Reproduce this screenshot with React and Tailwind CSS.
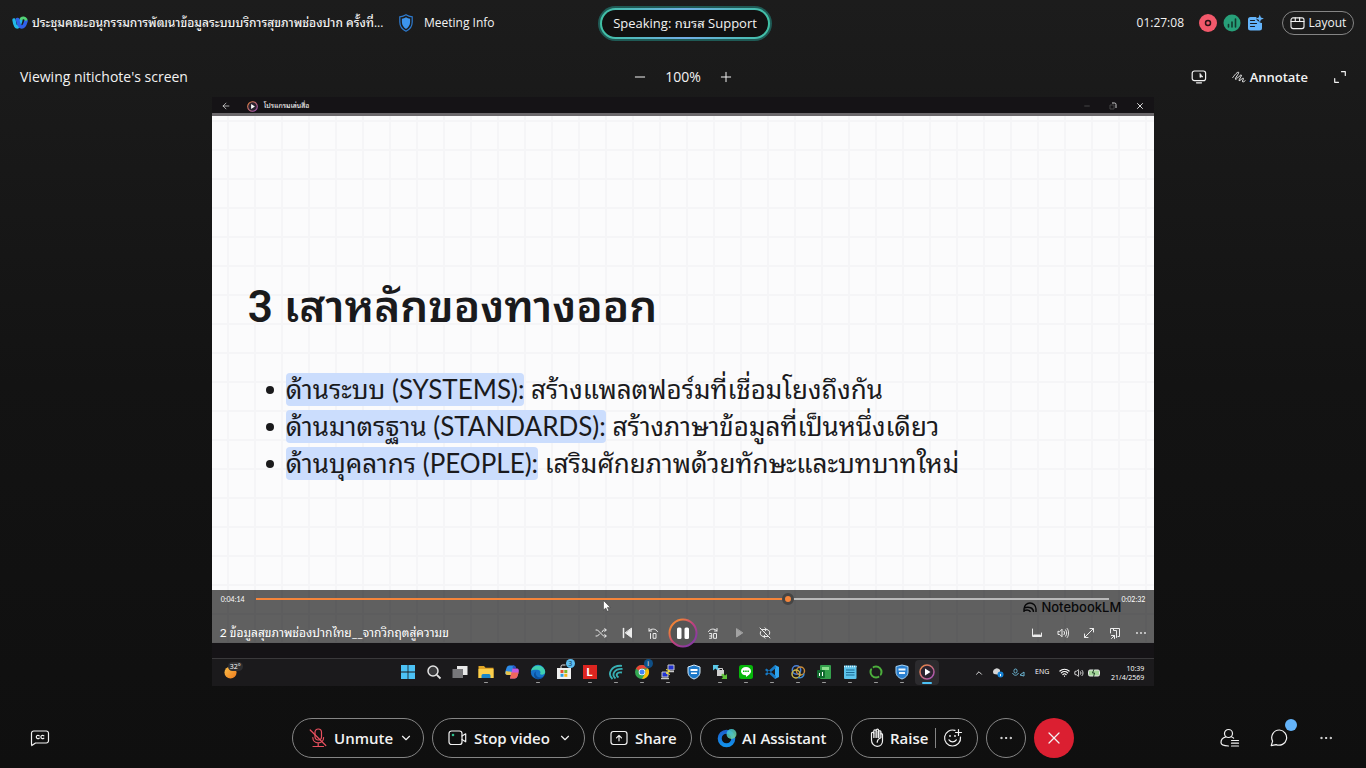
import React, { useState } from 'react';
import { ArrowLeft, ChevronDown, ChevronUp, Minus, Plus, X, Wifi, Volume2, MoreHorizontal } from 'lucide-react';

const line = { fill: "none", stroke: "currentColor", strokeWidth: 1.2, strokeLinecap: "round", strokeLinejoin: "round" };

/* ---------- Meeting icons ---------- */

function WebexLogo() {
  return (
    <svg width="16" height="14" viewBox="0 0 16 14" fill="none" strokeLinecap="round">
      <path d="M2 4C2.600 8 3.600 11 5.300 11c2 0 2.800-4 3.600-7" stroke="#22b8e8" strokeWidth="3.400" />
      <path d="M5.500 3.500c.8 3.600 2.300 7.500 4.300 7.500 2.200 0 3.500-3.400 4.200-6" stroke="#2f62ea" strokeWidth="3.600" />
      <path d="M9.300 2.600c1.400-1.200 3.600-1 4.700.8" stroke="#52d275" strokeWidth="2.800" />
    </svg>
  );
}

function ShieldInfo() {
  return (
    <svg width="14" height="18" viewBox="0 0 14 18">
      <path d="M7 .8C5.200 2 3 2.700.8 2.900V8c0 4.300 2.700 7.600 6.200 9.200 3.500-1.600 6.200-4.900 6.200-9.200V2.900C11 2.700 8.800 2 7 .8z" fill="none" stroke="#2d7bd0" strokeWidth="1.200" />
      <path d="M7 3.200C5.700 4 4.300 4.500 2.900 4.700V8c0 3.200 1.700 5.500 4.100 6.900C9.400 13.500 11.100 11.200 11.100 8V4.700C9.700 4.500 8.300 4 7 3.200z" fill="#3c95ee" />
    </svg>
  );
}

function NotesIcon() {
  return (
    <svg width="18" height="18" viewBox="0 0 18 18">
      <path d="M3.500 3H9.500a3.500 3.500 0 0 0 2 4.200A4 4 0 0 0 15 9v5a2.500 2.500 0 0 1-2.500 2.500h-9A2.500 2.500 0 0 1 1 14V5.500A2.500 2.500 0 0 1 3.500 3z" fill="#64b4fa" />
      <path d="M12.800.5l1.100 3 3 1.100-3 1.100-1.100 3-1.100-3-3-1.100 3-1.100z" fill="#64b4fa" />
      <path d="M3.500 6.500h4M3.500 9.500h6M3.500 12.500h4" stroke="#1a1a1a" strokeWidth="1.200" strokeLinecap="round" />
    </svg>
  );
}

function LayoutIcon() {
  return (
    <svg width="15" height="13" viewBox="0 0 16 14" {...line}>
      <rect x="1" y="1" width="14" height="11.500" rx="2.200" />
      <path d="M1 4.800h14M5.600 1v3.800M10.300 1v3.800" />
    </svg>
  );
}

function RemoteControl() {
  return (
    <svg width="16" height="14" viewBox="0 0 16 14" {...line}>
      <rect x="1.200" y="1" width="13.400" height="9.600" rx="2.200" />
      <path d="M5.500 12.800h5" />
      <path d="M9 3.800v3.700l1-.8 1.400.2z" fill="currentColor" strokeWidth=".8" />
    </svg>
  );
}

function Scribble() {
  return (
    <svg width="14" height="12" viewBox="0 0 14 12" {...line} strokeWidth="1">
      <path d="M.8 6.500C3 3.500 5.400.8 6.500 1.200 7.700 1.900 2.500 7.600 3.500 8.300c1 .6 4.800-5 5.800-4.300.9.700-3 5-2.200 5.700.8.500 3.300-3 4.200-2.500.8.500-1.400 2.800-.7 3.600.5.400 1.500-.2 2.500-1" />
    </svg>
  );
}

function Corners() {
  return (
    <svg width="12" height="12" viewBox="0 0 12 12" {...line}>
      <path d="M7.500.7h3.800v3.800M.7 7.500v3.800h3.800" />
    </svg>
  );
}

function MicOff() {
  return (
    <svg width="18" height="20" viewBox="0 0 18 20" {...line} stroke="#e8505f">
      <rect x="6" y="1" width="6.500" height="11" rx="3.200" />
      <path d="M3.800 9.500c0 3 2.300 5.300 5.400 5.300 3.200 0 5.400-2.300 5.400-5.300M9.200 14.800v3.700M4 18.500h10.500M1.200 2l15.600 15.500" />
    </svg>
  );
}

function Camera() {
  return (
    <svg width="20" height="16" viewBox="0 0 20 16" {...line}>
      <rect x="1" y="1" width="13" height="13.500" rx="2.600" />
      <path d="M14 6l3.700-2.200v8L14 9.600" />
      <circle cx="5" cy="5" r="1.300" fill="#2fbf8c" stroke="none" />
    </svg>
  );
}

function ShareIcon() {
  return (
    <svg width="18" height="16" viewBox="0 0 18 16" {...line}>
      <rect x="1" y="1.500" width="16" height="13" rx="2.400" />
      <path d="M9 10.800V5.500M6.500 7.800L9 5.300l2.500 2.500" />
    </svg>
  );
}

function AssistantIcon() {
  return (
    <svg width="20" height="20" viewBox="0 0 20 20">
      <defs>
        <linearGradient id="ai" x1="0" y1="0" x2="0" y2="1">
          <stop offset="0" stopColor="#1b63d0" />
          <stop offset="1" stopColor="#1390ea" />
        </linearGradient>
        <linearGradient id="bubble" x1="0" y1="0" x2="1" y2="1">
          <stop offset="0" stopColor="#2fc0ea" />
          <stop offset="1" stopColor="#7fd88a" />
        </linearGradient>
      </defs>
      <circle cx="9.500" cy="10.500" r="6.800" fill="none" stroke="url(#ai)" strokeWidth="4" />
      <circle cx="14.500" cy="6" r="5" fill="url(#bubble)" opacity="0.85" />
    </svg>
  );
}

function Hand() {
  return (
    <svg width="14" height="20" viewBox="0 0 14 20" {...line}>
      <path d="M1.500 12V5.200a1.200 1.200 0 0 1 2.300 0V3.100a1.200 1.200 0 0 1 2.400 0v-.7a1.200 1.200 0 0 1 2.400 0v1.200a1.200 1.200 0 0 1 2.300 0V6a1 1 0 0 1 1.600.8V13c0 3-2.200 5.300-5.400 5.300S1.500 15.500 1.500 12z" />
      <path d="M3.800 5v4.500M6.200 3v6.500M8.600 3v6.500M10.900 5v4.500" />
      <path d="M5 4v5.500M7.400 3v6.500M9.800 4v5.500" opacity="0.5" />
      <path d="M10.500 10C8.600 10.500 7.400 12 7.200 14.200" />
    </svg>
  );
}

function SmilePlus() {
  return (
    <svg width="20" height="20" viewBox="0 0 20 20" {...line}>
      <path d="M12 2.400A8 8 0 1 0 17.500 9" />
      <path d="M6 11.800c1.800 2.700 5.500 2.700 7.300 0M15.500 1.500v6M12.500 4.500h6" />
      <circle cx="7" cy="8" r=".9" fill="currentColor" stroke="none" />
      <circle cx="12" cy="8" r=".9" fill="currentColor" stroke="none" />
    </svg>
  );
}

function Captions() {
  return (
    <svg width="20" height="18" viewBox="0 0 20 18" {...line}>
      <path d="M3.700 2h12.600A2.200 2.200 0 0 1 18.500 4.200v7.600a2.200 2.200 0 0 1-2.200 2.200H5.500l-3.700 2.600c-.3-.6-.3-1.200-.3-2V4.200A2.200 2.200 0 0 1 3.700 2z" />
      <path d="M9.200 6.800c-1.300-1-2.900-.2-2.900 1.200s1.600 2.200 2.900 1.200M13.800 6.800c-1.300-1-2.900-.2-2.900 1.200s1.600 2.200 2.900 1.200" />
    </svg>
  );
}

function Participants() {
  return (
    <svg width="20" height="20" viewBox="0 0 20 20" {...line}>
      <circle cx="8.500" cy="5.500" r="4" />
      <path d="M5.800 8.800C2.800 9.600 1 12 1 14.500c0 2.300 2 3.300 7.500 3.500M11.300 8.800c.9.300 1.700.7 2.300 1.300" />
      <path d="M11.500 12.500h7M11.500 15.200h7M11.500 18h7" />
    </svg>
  );
}

function Chat() {
  return (
    <svg width="18" height="18" viewBox="0 0 18 18" {...line}>
      <path d="M9.500 1a7.600 7.600 0 1 1-3.400 14.600L1.200 16.700l1.400-4.600A7.600 7.600 0 0 1 9.500 1z" />
    </svg>
  );
}

/* ---------- Player icons ---------- */

function PlayerIcon({ d, dim, children }) {
  return (
    <svg width="12" height="12" viewBox="0 0 12 12" {...line} strokeWidth="1" className={dim ? "text-[#a3a3a3]" : "text-[#ececec]"}>
      {d && <path d={d} />}
      {children}
    </svg>
  );
}

const playerLeft = [
  { label: "Shuffle", icon: <PlayerIcon d="M1 3h1.500L8.500 9h2.500M1 9h1.500l2-2M7 5l1.500-2H11M9.800 1.500L11.200 3 9.800 4.500M9.800 7.500L11.200 9l-1.400 1.500" /> },
  { label: "Previous", icon: <PlayerIcon><path d="M2.500 1.500v9" strokeWidth="1.500" /><path d="M10.500 1.500v9L4.500 6z" fill="currentColor" /></PlayerIcon> },
  { label: "Back 10 seconds", icon: <PlayerIcon d="M2 4a5 5 0 0 1 8.500.5M2 1.500V4h2.500M3.500 6.500v5M6.500 6.500h2.500v4.800H6.500z" /> },
];

const playerRight = [
  { label: "Forward 30 seconds", icon: <PlayerIcon d="M10 4a5 5 0 0 0-8.500.5M10 1.500V4H7.500M2.500 6.500h2.200v4.800H2.500M2.700 9h2M7 6.500h2.500v4.800H7z" /> },
  { label: "Next", icon: <PlayerIcon dim><path d="M3.500 2v8L9.500 6z" fill="currentColor" /></PlayerIcon> },
  { label: "Repeat", icon: <PlayerIcon d="M3.500 2.500h4a3.300 3.300 0 0 1 2.800 5M8.500 9.500h-4a3.300 3.300 0 0 1-2.800-5M1 1l10 10M6 .8l1.700 1.700L6 4M6 8L4.300 9.500 6 11.200" /> },
];

const playerTools = [
  { label: "Subtitles", icon: <PlayerIcon><path d="M1.500 2v7.500h9V6" /><path d="M3 8.500h6" strokeWidth="2" /></PlayerIcon> },
  { label: "Volume", icon: <PlayerIcon d="M1 4.500v3h1.800L5 9.800V2.200L2.800 4.500zM7 4.300c.8 1 .8 2.400 0 3.400M8.600 2.800c1.500 1.900 1.500 4.500 0 6.400M10.200 1.500c2 2.700 2 6.300 0 9" /> },
  { label: "Full screen", icon: <PlayerIcon d="M1.500 10.500l9-9M7 1.500h3.500V5M1.500 7v3.500H5" /> },
  { label: "Mini player", icon: <PlayerIcon d="M1.500 6V1.500h9v8H9M4.500 1.500v2h3v7M2.500 8.500h3v3M2.500 11.500l3-3" /> },
  { label: "More options", icon: <PlayerIcon><circle cx="2" cy="6" r=".9" fill="currentColor" stroke="none" /><circle cx="6" cy="6" r=".9" fill="currentColor" stroke="none" /><circle cx="10" cy="6" r=".9" fill="currentColor" stroke="none" /></PlayerIcon> },
];

function MediaPlayerLogo({ size }) {
  return (
    <svg width={size} height={size} viewBox="0 0 16 16">
      <defs>
        <linearGradient id="ring" x1="0" y1="0" x2="1" y2="1">
          <stop offset="0" stopColor="#f08a3c" />
          <stop offset="1" stopColor="#a04fc0" />
        </linearGradient>
      </defs>
      <circle cx="8" cy="8" r="7" fill="#2c2430" stroke="url(#ring)" strokeWidth="1.500" />
      <path d="M6 4.500v7L11.500 8z" fill="#fff" />
    </svg>
  );
}

/* ---------- Windows taskbar ---------- */

const taskbarApps = [
  { name: "Start", art: <path d="M1 1h6.600v6.600H1zM8.400 1H15v6.600H8.400zM1 8.400h6.600V15H1zM8.400 8.400H15V15H8.400z" fill="#4cc2f5" /> },
  { name: "Search", art: <><circle cx="7" cy="7" r="5" fill="#3a3a3c" stroke="#e4e4e4" strokeWidth="1.500" /><path d="M10.800 10.800L14.500 14.500" stroke="#e4e4e4" strokeWidth="1.800" /></> },
  { name: "Task view", art: <><path d="M5 2h10.500v9H5z" fill="#e8e8e8" /><path d="M.5 5h10.500v9H.5z" fill="#77777a" /></> },
  { name: "File Explorer", open: true, art: <><path d="M.5 2h5.500l1.500 1.800h8V14H.5z" fill="#e0a526" /><path d="M.5 5h15v9H.5z" fill="#fbcf4c" /><path d="M3.500 14v-2.500A1.500 1.500 0 0 1 5 10h6a1.500 1.500 0 0 1 1.500 1.500V14z" fill="#1a86c8" /></> },
  { name: "Copilot", art: <><path d="M5.500 1.500H10L7.500 11H3.500C1 11 .8 9 1.500 7l1-3c.5-1.500 1.300-2.500 3-2.500z" fill="#2d8be8" /><path d="M2 7l-.5 2c-.2 1.500.8 2 2 2h4L8.300 8z" fill="#e8c44c" /><path d="M9 1.500h1c1.500 0 1.800 1 2.300 3H8.500z" fill="#2456c8" /><path d="M8.500 4.500h4C15 4.500 15.200 6.500 14.500 9l-1 3c-.5 1.500-1.300 2.500-3 2.500H6z" fill="#c45ae0" /><path d="M7.500 8.500h7l-1 3.500c-.5 1.500-1.300 2.500-3 2.500H6z" fill="#f0685c" /></> },
  { name: "Edge", open: true, art: <><circle cx="8" cy="8" r="7.200" fill="#1571c8" /><path d="M1 7a7.200 7.200 0 0 1 14.200 1c0 2.500-3.500 3.500-5.200 2 1.200-2 .2-4-2.500-4.200C4.500 5.600 2 6 1 7z" fill="#3fd0b0" /><path d="M7 6.500c-2.500 2-1.500 6.500 3 7 2 .1 3-.5 4-1.300-1 1.800-3.500 3-6 3-3-.5-5-4-3.500-6.500z" fill="#0b4f9c" /></> },
  { name: "Microsoft Store", art: <><path d="M5 4V2.500A1.500 1.500 0 0 1 6.500 1h3" fill="none" stroke="#e8e8e8" /><path d="M1 4h14v11H1z" fill="#f0f0f0" /><path d="M4.500 6h3v3h-3z" fill="#e5502c" /><path d="M8.300 6h3v3h-3z" fill="#79b829" /><path d="M4.500 9.800h3v3h-3z" fill="#2a9fe0" /><path d="M8.300 9.800h3v3h-3z" fill="#f6b518" /></>, badge: "3" },
  { name: "L", open: true, art: <rect x="1" y="1" width="14" height="14" fill="#dc2520" />, letter: "L" },
  { name: "Wireshark", open: true, art: <g fill="none" stroke="#38b0b4" strokeWidth="1.800"><path d="M4.500 15C-1 10 3 1 14 1.800" /><path d="M7.500 14.500C3 10.500 6.500 4.500 14.500 5" /><path d="M10.500 13.500C7 11 9 7.500 14 8.500" /></g> },
  { name: "Chrome", open: true, art: <><circle cx="8" cy="8" r="7" fill="#34a853" /><path d="M8 1a7 7 0 0 1 6.100 3.500H8A3.500 3.500 0 0 0 4.800 6.800L2 4.400A7 7 0 0 1 8 1z" fill="#ea4335" /><path d="M14.100 4.500A7 7 0 0 1 8 15l3-5.200a3.500 3.500 0 0 0 0-3.600z" fill="#fbbc05" /><circle cx="8" cy="8" r="3.300" fill="#fff" /><circle cx="8" cy="8" r="2.500" fill="#4285f4" /></>, badge: "i" },
  { name: "PuTTY", open: true, art: <><path d="M8 1h6v5H8zM2 8h6v5H2z" fill="#2233d0" stroke="#c8c8c8" /><path d="M8 7.500h6M1 14.500h8" stroke="#c8c8c8" strokeWidth="1.500" /><path d="M6 5.500l4 1.500-4 2 4 1.500" fill="none" stroke="#f3e23a" /></> },
  { name: "Defender", art: <><path d="M8 1l6 2v5c0 3.500-2.500 5.800-6 7-3.500-1.200-6-3.500-6-7V3z" fill="#1c78c8" stroke="#d6ebfa" /><path d="M4.500 5h7v2h-7zM5 8.500h6v1.500H5z" fill="#fff" /></> },
  { name: "WinSCP", open: true, art: <><path d="M1 1h6L5.500 3 8 5.500 6 7 3.500 4.500 1 6.500z" fill="#5ac8e8" /><path d="M5 6h7v6H5z" fill="#d0d0d0" /><path d="M6.500 6V4.500h4V6" fill="none" stroke="#d0d0d0" /><path d="M15 15H9.500l1.500-2-2-2 2-1.500 2 2L15 10z" fill="#5fc23a" /></> },
  { name: "LINE", open: true, art: <><rect x="1" y="1" width="14" height="14" rx="2.500" fill="#06b60a" /><path d="M8 3c3 0 5 1.900 5 4.200 0 2.500-3.200 4.600-5 5.800v-1.700C5 11.300 3 9.500 3 7.200S5 3 8 3z" fill="#fff" /><path d="M5 7.200h6" stroke="#06b60a" strokeWidth="1.600" strokeDasharray="1.500 .7" /></> },
  { name: "VS Code", open: true, art: <><path d="M11 1l4 2v10l-4 2z" fill="#2fa5ee" /><path d="M11 1L1 10l1.500 1.500L12 4zM11 15L1 6l1.500-1.500L12 12z" fill="#1679c4" /></> },
  { name: "Navicat", open: true, art: <g fill="none" strokeWidth="1.500"><circle cx="6.500" cy="6" r="4.200" stroke="#4a80d8" /><circle cx="10.500" cy="7" r="4" stroke="#c88a38" /><circle cx="6" cy="10" r="4" stroke="#c9b94c" /><path d="M8 13.500c3 1 6-.5 6-4" stroke="#3d8ad0" /></g> },
  { name: "Sheets", open: true, art: <><rect x="4" y="1" width="11" height="14" rx="1" fill="#34a04c" /><path d="M6 3h7v3H6z" fill="#8de08e" /><rect x="1" y="6" width="8" height="8" rx="1" fill="#116b2e" /><path d="M3.500 12V9M6.500 12V8" stroke="#fff" /></> },
  { name: "Notepad", open: true, art: <><rect x="2" y="1.500" width="12.500" height="13.500" rx="1" fill="#5cc2ea" /><path d="M2 2.500h12.500" stroke="#dff4fc" strokeWidth="1.500" strokeDasharray="1 1" /><path d="M4 6h8.500M4 8.500h8.500M4 11h8.500" stroke="#1b6a94" /></> },
  { name: "Sync", open: true, art: <><circle cx="8" cy="8" r="5.500" fill="none" stroke="#4caf3c" strokeWidth="2" /><path d="M3.500 3l2 3.200M12.500 13l-2-3.200" stroke="#1b1b1d" strokeWidth="1.500" /></> },
  { name: "Security", open: true, art: <><path d="M8 1l6 1.500V8c0 3.500-2.500 5.800-6 7-3.500-1.200-6-3.500-6-7V2.500z" fill="#2a80d0" stroke="#a8d4f4" /><path d="M4.500 4.500h7v2h-7zM5 8h6v2H5z" fill="#e8f5fd" /></> },
];

function Taskbar() {
  return (
    <div className="flex h-[28px] shrink-0 items-center border-t border-[#3a393b] bg-[#1b1a1c] text-white">
      <div className="w-[183px] shrink-0 pl-3">
        <div className="relative w-[18px]">
          <svg width="13" height="13" viewBox="0 0 14 14">
            <defs>
              <linearGradient id="sun" x1="0" y1="0" x2="1" y2="1">
                <stop offset="0" stopColor="#fbc04a" />
                <stop offset="1" stopColor="#ee7a1c" />
              </linearGradient>
            </defs>
            <circle cx="7" cy="7" r="6.500" fill="url(#sun)" />
          </svg>
          <span className="absolute -top-1 left-1 rounded-full bg-[#2e2e30] px-[2px] text-[7px] leading-[9px]">32°</span>
        </div>
      </div>
      <div className="flex items-center">
        {taskbarApps.map(app => (
          <button key={app.name} aria-label={app.name} className="relative flex h-[27px] w-[26px] items-center justify-center pb-[2px]">
            <svg width="16" height="16" viewBox="0 0 16 16">{app.art}</svg>
            {app.letter && <span className="absolute font-['Inter'] text-[11px] leading-4 font-bold">{app.letter}</span>}
            {app.badge && (
              <span className={`absolute top-0 right-[2px] h-[9px] w-[9px] rounded-full text-center text-[7px] leading-[9px] ${app.badge === "3" ? "bg-[#5cbdf0] text-[#10344a]" : "bg-[#0f4f86] text-white"}`}>
                {app.badge}
              </span>
            )}
            {app.open && <span className="absolute bottom-[3px] h-px w-[4px] rounded-full bg-[#9a9a9a]" />}
          </button>
        ))}
        <button aria-label="Media Player" className="relative flex h-[25px] w-[24px] items-center justify-center rounded-sm bg-[#2c2b2e] pb-[2px]">
          <MediaPlayerLogo size={16} />
          <span className="absolute bottom-px h-[2px] w-[10px] rounded-full bg-[#4cc2f5]" />
        </button>
      </div>
      <div className="ml-auto flex items-center pr-[10px]">
        <ChevronUp size={10} strokeWidth={2} />
        <svg className="ml-[9px]" width="11" height="10" viewBox="0 0 11 10"><path d="M1 6a3 3 0 0 1 1-5 3.500 3.500 0 0 1 5 1v5z" fill="#d5d5d5" /><circle cx="7.500" cy="6.500" r="3" fill="#1583d6" /><path d="M7.500 6v2.200" stroke="#fff" /></svg>
        <svg className="ml-2" width="13" height="10" viewBox="0 0 13 10" fill="none" stroke="#6cb6d4"><rect x="2" y="1" width="3" height="4" rx="1.500" /><path d="M.5 5c1.500 3 4.500 3 6 0M8 7l4-3v4z" /></svg>
        <span className="ml-[10px] text-[7px]">ENG</span>
        <Wifi className="ml-[10px]" size={11} strokeWidth={2.5} />
        <Volume2 className="ml-1" size={10} strokeWidth={2} />
        <svg className="ml-1" width="13" height="8" viewBox="0 0 13 8"><rect x=".5" y="1" width="11" height="6" rx="1.500" fill="#a4d69a" stroke="#e8e8e8" /><path d="M6 0L4.500 4h2L5.500 8" fill="none" stroke="#23402a" /></svg>
        <div className="ml-[8px] w-[35px] text-right text-[7px] leading-[9px]">
          <div>10:39</div>
          <div>21/4/2569</div>
        </div>
      </div>
    </div>
  );
}

/* ---------- Shared screen ---------- */

const pillars = [
  { term: "ด้านระบบ (SYSTEMS):", text: "สร้างแพลตฟอร์มที่เชื่อมโยงถึงกัน" },
  { term: "ด้านมาตรฐาน (STANDARDS):", text: "สร้างภาษาข้อมูลที่เป็นหนึ่งเดียว" },
  { term: "ด้านบุคลากร (PEOPLE):", text: "เสริมศักยภาพด้วยทักษะและบทบาทใหม่" },
];

function PlayerButton({ item }) {
  return (
    <button aria-label={item.label} className="flex h-5 w-[26px] items-center justify-center">{item.icon}</button>
  );
}

function PlayerControls() {
  const [position, setPosition] = useState(253);
  const percent = (position / 406) * 100;

  return (
    <div className="absolute inset-x-0 bottom-0 flex h-[53px] flex-col justify-between bg-black/62 text-white">
      <div className="flex h-[18px] items-center px-[9px] text-[7px]">
        <span className="w-[35px]">0:04:14</span>
        <div className="relative flex h-3 flex-1 items-center">
          <div className="h-[2px] w-full bg-[#b9b9b9]">
            <div className="h-full bg-[#f5853b]" style={{ width: `${percent}%` }} />
          </div>
          <div className="absolute h-3 w-3 -translate-x-1/2 rounded-full border-[3px] border-[#454545] bg-[#f5853b]" style={{ left: `${percent}%` }} />
          <input
            type="range"
            aria-label="Seek"
            min="0"
            max="406"
            value={position}
            onChange={(e) => setPosition(Number(e.target.value))}
            className="absolute inset-0 w-full opacity-0"
          />
        </div>
        <span className="w-[36px] text-right">0:02:32</span>
      </div>
      <div className="grid h-5 grid-cols-[1fr_auto_1fr] items-center">
        <span className="pl-2 text-[12px] leading-5 whitespace-nowrap">2 ข้อมูลสุขภาพช่องปากไทย__จากวิกฤตสู่ความข</span>
        <div className="flex items-center">
          {playerLeft.map(item => <PlayerButton key={item.label} item={item} />)}
          <button aria-label="Pause" className="flex h-5 w-[34px] items-center justify-center">
            <svg className="shrink-0" width="30" height="30" viewBox="0 0 30 30">
              <defs>
                <linearGradient id="pause" x1="0" y1="0" x2="1" y2="1">
                  <stop offset="0.2" stopColor="#f08038" />
                  <stop offset="0.5" stopColor="#c0417f" />
                  <stop offset="0.8" stopColor="#8c3aa0" />
                </linearGradient>
              </defs>
              <circle cx="15" cy="15" r="13.500" fill="#555" stroke="url(#pause)" strokeWidth="2" />
              <rect x="9" y="9.500" width="4.500" height="11.500" rx="1.500" fill="#fff" />
              <rect x="16.500" y="9.500" width="4.500" height="11.500" rx="1.500" fill="#fff" />
            </svg>
          </button>
          {playerRight.map(item => <PlayerButton key={item.label} item={item} />)}
        </div>
        <div className="flex justify-end">
          {playerTools.map(item => <PlayerButton key={item.label} item={item} />)}
        </div>
      </div>
    </div>
  );
}

function SharedScreen() {
  return (
    <div className="mx-auto flex w-[69%] flex-1 flex-col bg-[#151316]">
      <div className="flex h-4 shrink-0 items-center pt-[2px] text-white">
        <ArrowLeft className="ml-[9px]" size={10} strokeWidth={1.5} />
        <span className="ml-4"><MediaPlayerLogo size={11} /></span>
        <span className="ml-[6px] text-[7px] leading-3">โปรแกรมเล่นสื่อ</span>
        <div className="ml-auto flex items-center gap-[18px] pr-[9px]">
          <Minus size={8} strokeWidth={1.5} className="text-[#777]" />
          <svg width="8" height="8" viewBox="0 0 8 8" fill="none" stroke="#ccc"><path d="M3 1h2.500A1.500 1.500 0 0 1 7 2.500V6" /><path d="M1 3v4h4V3z" stroke="#444" /></svg>
          <X size={10} strokeWidth={2} />
        </div>
      </div>
      <div className="h-[3px] shrink-0 bg-[#6b686b]" />

      <div className="relative flex flex-1 flex-col justify-center bg-[#fbfbfc] bg-[linear-gradient(to_right,#f5f5f7_2px,transparent_2px),linear-gradient(to_bottom,#f5f5f7_2px,transparent_2px)] bg-[size:27px_29px] bg-[position:15px_4px] pb-[2px] pl-[36px] font-['Lato','Noto_Sans_Thai_Looped','Loma','Noto_Sans_Thai',sans-serif] text-[#1a1a1c]">
        <h1 className="font-['Roboto','Noto_Sans_Thai_Looped','Loma','Noto_Sans_Thai',sans-serif] text-[44px] leading-[64px] font-semibold">3 เสาหลักของทางออก</h1>
        <ul className="mt-8 list-none">
          {pillars.map(p => (
            <li key={p.term} className="flex h-[37px] items-center text-[26px] leading-[33px]">
              <span className="mr-[12px] ml-[18px] h-2 w-2 shrink-0 rounded-full bg-[#1a1a1c]" />
              <span className="whitespace-nowrap"><mark className="inline-block h-[33px] rounded-sm bg-[#cbddfd] text-inherit">{p.term}</mark> {p.text}</span>
            </li>
          ))}
        </ul>
        <div className="absolute right-[33px] bottom-[27px] flex items-center gap-1 font-['Inter'] text-[13px] leading-[18px] font-medium text-[#1a1a1c]">
          <svg width="14" height="11" viewBox="0 0 14 11" fill="none" stroke="#1a1a1c" strokeWidth="1.400"><path d="M1 10V7a6 6 0 0 1 12 0v3M1 6c5-2 9.500 0 9.500 4M1 8.500c3.500-1 6 0 6.500 1.500" /></svg>
          NotebookLM
        </div>
        <PlayerControls />
        <svg className="absolute bottom-[31px] left-[391px]" width="8" height="12" viewBox="0 0 8 12"><path d="M.5.500v9.500l2.300-2 1.500 3.300 1.500-.7-1.500-3.200h3z" fill="#fff" stroke="#333" strokeWidth=".5" /></svg>
      </div>

      <div className="h-[15px] shrink-0" />
      <Taskbar />
    </div>
  );
}

/* ---------- Webex chrome ---------- */

function PillButton({ children, className = "" }) {
  return (
    <button className={`flex h-10 items-center rounded-full border border-[#858585] text-[15px] font-semibold whitespace-nowrap ${className}`}>
      {children}
    </button>
  );
}

function Header() {
  return (
    <header className="grid h-[46px] shrink-0 grid-cols-[1fr_auto_1fr] items-center">
      <div className="flex min-w-0 items-center pl-3">
        <WebexLogo />
        <h2 className="ml-1 w-[352px] text-[12px] leading-5 font-medium whitespace-nowrap">ประชุมคณะอนุกรรมการพัฒนาข้อมูลระบบบริการสุขภาพช่องปาก ครั้งที่...</h2>
        <button className="ml-[15px] flex items-center gap-[11px] text-[12px] font-medium whitespace-nowrap">
          <ShieldInfo />
          Meeting Info
        </button>
      </div>
      <div className="ml-1 rounded-full bg-[#1f5a55] p-[2px]">
        <div className="rounded-full bg-[linear-gradient(to_right,#3fc0a4,#72aee6,#3fc0a4)] p-[2px]">
          <div className="rounded-full bg-[#111] px-[11px] text-[13px] leading-[27px]">Speaking: กบรส Support</div>
        </div>
      </div>
      <div className="flex items-center justify-end pr-3">
        <span className="text-[12px]">01:27:08</span>
        <svg className="ml-[15px]" width="18" height="18" viewBox="0 0 18 18"><circle cx="9" cy="9" r="9" fill="#f2596b" /><circle cx="9" cy="9" r="2.500" fill="none" stroke="#2a1216" strokeWidth="1.500" /></svg>
        <svg className="ml-[6px]" width="18" height="18" viewBox="0 0 18 18"><circle cx="9" cy="9" r="8.500" fill="#27a079" /><path d="M5.500 13v-2.500M9 13V8M12.500 13V5" stroke="#123a2e" strokeWidth="1.600" strokeLinecap="round" /></svg>
        <span className="ml-[6px]"><NotesIcon /></span>
        <button className="ml-[17px] flex h-6 w-[72px] items-center justify-center gap-1 rounded-full border border-[#858585] text-[12px] font-medium">
          <LayoutIcon />
          Layout
        </button>
      </div>
    </header>
  );
}

function ViewBar() {
  return (
    <div className="grid h-[51px] shrink-0 grid-cols-[1fr_auto_1fr] items-center pt-[11px]">
      <span className="pl-5 text-[14px] leading-5">Viewing nitichote's screen</span>
      <div className="flex items-center text-[14px] leading-5">
        <button aria-label="Zoom out"><Minus size={16} strokeWidth={1.5} /></button>
        <span className="w-[70px] text-center">100%</span>
        <button aria-label="Zoom in"><Plus size={16} strokeWidth={1.5} /></button>
      </div>
      <div className="flex items-center justify-end pr-5">
        <button aria-label="Request control"><RemoteControl /></button>
        <button className="ml-[25px] flex items-center gap-1 text-[13px] leading-5 font-semibold"><Scribble />Annotate</button>
        <button aria-label="Full screen" className="ml-[26px]"><Corners /></button>
      </div>
    </div>
  );
}

function ControlBar() {
  return (
    <footer className="grid shrink-0 grid-cols-[1fr_auto_1fr] items-center pt-8 pb-[10px]">
      <div className="pl-[30px]">
        <button aria-label="Captions" className="block"><Captions /></button>
      </div>
      <div className="flex gap-2">
        <PillButton className="w-[132px] pl-4">
          <MicOff /><span className="mr-[6px] ml-[7px]">Unmute</span><ChevronDown size={14} strokeWidth={2} />
        </PillButton>
        <PillButton className="w-[153px] pl-[15px]">
          <Camera /><span className="mr-[8px] ml-[6px]">Stop video</span><ChevronDown size={14} strokeWidth={2} />
        </PillButton>
        <PillButton className="w-[99px] gap-[7px] pl-4"><ShareIcon />Share</PillButton>
        <PillButton className="w-[143px] gap-[5px] pl-4"><AssistantIcon />AI Assistant</PillButton>
        <div className="flex h-10 w-[127px] items-center rounded-full border border-[#858585] pl-[18px] text-[15px] font-semibold">
          <button className="flex items-center gap-[6px]"><Hand />Raise</button>
          <span className="mr-[7px] ml-[7px] h-5 w-px bg-[#858585]" />
          <button aria-label="Reactions"><SmilePlus /></button>
        </div>
        <PillButton className="w-10 justify-center"><MoreHorizontal size={16} strokeWidth={1.5} /></PillButton>
        <button aria-label="Leave meeting" className="flex h-10 w-10 items-center justify-center rounded-full bg-[#db1f31]">
          <X size={20} strokeWidth={1.5} />
        </button>
      </div>
      <div className="flex items-center justify-end gap-[30px] pr-8">
        <button aria-label="Participants"><Participants /></button>
        <button aria-label="Chat" className="relative">
          <Chat />
          <span className="absolute -top-[10px] -right-[9px] h-3 w-3 rounded-full bg-[#64b4fa]" />
        </button>
        <button aria-label="More"><MoreHorizontal size={16} strokeWidth={1.5} /></button>
      </div>
    </footer>
  );
}

export default function App() {
  return (
    <div className="flex min-h-screen flex-col bg-linear-to-b from-[#1c1c1c] via-[#131313] to-[#0f0f0f] font-['Open_Sans','Noto_Sans_Thai_Looped','Loma','Noto_Sans_Thai',sans-serif] text-[#f2f2f2]">
      <Header />
      <ViewBar />
      <SharedScreen />
      <ControlBar />
    </div>
  );
}
